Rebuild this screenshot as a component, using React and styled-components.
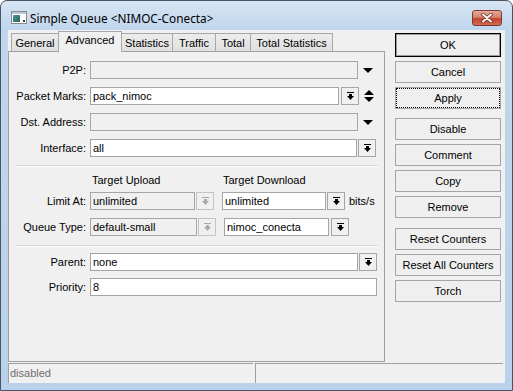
import styled, { createGlobalStyle, css } from "styled-components";

const GlobalStyle = createGlobalStyle`
  html, body {
    margin: 0;
    padding: 0;
    background: #ffffff;
  }
  body {
    font-family: "Liberation Sans", Arial, sans-serif;
    font-size: 11px;
    color: #000;
  }
`;

const Window = styled.div`
  width: 513px;
  height: 391px;
  box-sizing: border-box;
  border: 1px solid #4a5564;
  border-radius: 7px 7px 0 0;
  background: linear-gradient(#d6e5f4 0px, #c0d6ec 28px, #b9d1ea 100%);
  display: flex;
  flex-direction: column;
  padding: 0 7px 7px 7px;
`;

const TitleBar = styled.div`
  height: 29px;
  box-sizing: border-box;
  padding: 4px 3px 0 3px;
  display: flex;
  align-items: center;
`;

const Title = styled.span`
  font-family: "Noto Sans", "Open Sans", sans-serif;
  font-size: 11.8px;
  margin-left: 3px;
  flex: 1;
  color: #000;
`;

const CloseButton = styled.div`
  width: 30px;
  height: 16px;
  box-sizing: border-box;
  border: 1px solid #7e3a31;
  border-radius: 3px;
  background: linear-gradient(#e8a999 0%, #d7816f 45%, #c2432f 55%, #d66b50 100%);
  display: flex;
  align-items: center;
  justify-content: center;
`;

const Client = styled.div`
  flex: 1;
  background: #f0f0f0;
  display: flex;
  flex-direction: column;
`;

const Main = styled.div`
  flex: 1;
  display: flex;
`;

const LeftCol = styled.div`
  width: 377px;
  display: flex;
  flex-direction: column;
`;

const TabRow = styled.div`
  height: 21px;
  display: flex;
  align-items: flex-end;
  padding-left: 3px;
  position: relative;
  z-index: 1;
`;

const Tab = styled.div`
  width: ${(p) => p.$w}px;
  height: 18px;
  box-sizing: border-box;
  border: 1px solid #a7a7a7;
  border-bottom: none;
  background: linear-gradient(#ececec, #e0e0e0);
  display: flex;
  align-items: center;
  justify-content: center;
  white-space: nowrap;
  & + & {
    margin-left: -1px;
  }
  ${(p) =>
    p.$active &&
    css`
      height: 21px;
      margin-bottom: -1px;
      background: #f0f0f0;
      position: relative;
      z-index: 2;
      align-items: flex-start;
      padding-top: 2px;
    `}
`;

const Panel = styled.div`
  flex: 1;
  border: 1px solid #a0a0a0;
  background: #f0f0f0;
  padding-top: 9px;
`;

const Row = styled.div`
  display: flex;
  align-items: center;
  height: 18px;
  margin-top: ${(p) => p.$mt ?? 8}px;
`;

const Label = styled.div`
  width: 77px;
  margin-right: 4px;
  text-align: right;
  white-space: nowrap;
  flex-shrink: 0;
`;

const Field = styled.div`
  width: ${(p) => p.$w}px;
  height: 18px;
  box-sizing: border-box;
  border: 1px solid #a5a5a5;
  background: ${(p) => (p.$disabled ? "#f0f0f0" : "#ffffff")};
  padding-left: 2px;
  line-height: 16px;
  white-space: nowrap;
  overflow: hidden;
  margin-right: ${(p) => p.$mr ?? 0}px;
  flex-shrink: 0;
`;

const DropBtn = styled.div`
  width: 18px;
  height: 18px;
  box-sizing: border-box;
  border: 1px solid ${(p) => (p.$disabled ? "#c4c4c4" : "#a5a5a5")};
  background: #f0f0f0;
  display: flex;
  align-items: center;
  justify-content: center;
  color: ${(p) => (p.$disabled ? "#a9a9a9" : "#000")};
  margin-right: ${(p) => p.$mr ?? 0}px;
  flex-shrink: 0;
`;

const Side = styled.div`
  margin-left: ${(p) => p.$ml}px;
  display: flex;
  align-items: center;
`;

const Separator = styled.div`
  margin: ${(p) => p.$mt}px 6px 0 7px;
  height: 0;
  border-top: 1px solid #d5d5d5;
  border-bottom: 1px solid #ffffff;
`;

const HeaderRow = styled.div`
  display: flex;
  height: 16px;
  align-items: center;
  margin-top: 5px;
  padding-left: 81px;
`;

const HeaderCell = styled.div`
  width: ${(p) => p.$w}px;
  padding-left: 2px;
  box-sizing: border-box;
  white-space: nowrap;
`;

const Unit = styled.span`
  margin-left: 4px;
`;

const RightCol = styled.div`
  width: 106px;
  margin-left: 10px;
  padding-top: 3px;
  display: flex;
  flex-direction: column;
`;

const Button = styled.div`
  height: 22px;
  box-sizing: border-box;
  border: 1px solid #a5a5a5;
  background: #efefef;
  display: flex;
  align-items: center;
  justify-content: center;
  margin-top: ${(p) => p.$mt ?? 4}px;
  white-space: nowrap;
  position: relative;
  ${(p) =>
    p.$default &&
    css`
      height: 24px;
      border: 1px solid #000;
      box-shadow: inset 0 0 0 1px #9a9a9a;
    `}
  ${(p) =>
    p.$focus &&
    css`
      outline: 1px dotted #000;
      outline-offset: -2px;
    `}
`;

const StatusBar = styled.div`
  height: 21px;
  display: flex;
  padding-top: 1px;
  box-sizing: border-box;
  padding-right: 2px;
`;

const StatusCell = styled.div`
  width: ${(p) => p.$w}px;
  margin-right: ${(p) => p.$mr ?? 0}px;
  border-top: 1px solid #a0a0a0;
  border-left: 1px solid #a0a0a0;
  color: #6d6d6d;
  padding-left: 1px;
  line-height: 18px;
  box-sizing: border-box;
`;

const WindowIcon = () => (
  <svg width="16" height="13" viewBox="0 0 16 13">
    <defs>
      <linearGradient id="ic" x1="0" y1="0" x2="1" y2="1">
        <stop offset="0" stopColor="#4f93a6" />
        <stop offset="1" stopColor="#2a6a4c" />
      </linearGradient>
    </defs>
    <rect x="0.5" y="0.5" width="15" height="12" fill="#ffffff" stroke="#8a8a8a" />
    <rect x="1" y="1" width="14" height="2" fill="#b7c9da" />
    <rect x="2" y="4" width="7" height="7" fill="url(#ic)" />
    <rect x="12" y="9" width="2" height="2" fill="#333" />
  </svg>
);

const CloseX = () => (
  <svg width="12" height="10" viewBox="0 0 12 10">
    <path d="M2 1.5 L10 8.5 M10 1.5 L2 8.5" stroke="#6b2a22" strokeWidth="3.6" strokeLinecap="round" />
    <path d="M2 1.5 L10 8.5 M10 1.5 L2 8.5" stroke="#ffffff" strokeWidth="2" strokeLinecap="round" />
  </svg>
);

const DropIcon = () => (
  <svg width="7" height="8" viewBox="0 0 7 8" fill="currentColor">
    <rect x="0" y="0" width="7" height="1" />
    <rect x="2" y="2" width="3" height="2" />
    <polygon points="0,4 7,4 3.5,8" />
  </svg>
);

const DownArrow = () => (
  <svg width="10" height="5" viewBox="0 0 10 5">
    <polygon points="0,0 10,0 5,5" fill="#000" />
  </svg>
);

const UpDownArrow = () => (
  <svg width="10" height="12" viewBox="0 0 10 12">
    <polygon points="5,0 10,5 0,5" fill="#000" />
    <polygon points="0,7 10,7 5,12" fill="#000" />
  </svg>
);

const tabs = [
  { name: "General", w: 48 },
  { name: "Advanced", w: 64, active: true },
  { name: "Statistics", w: 52 },
  { name: "Traffic", w: 44 },
  { name: "Total", w: 36 },
  { name: "Total Statistics", w: 83 },
];

const App = () => {
  return (
    <>
      <GlobalStyle />
      <Window>
        <TitleBar>
          <WindowIcon />
          <Title>Simple Queue &lt;NIMOC-Conecta&gt;</Title>
          <CloseButton>
            <CloseX />
          </CloseButton>
        </TitleBar>
        <Client>
          <Main>
            <LeftCol>
              <TabRow>
                {tabs.map((t) => (
                  <Tab key={t.name} $w={t.w} $active={t.active}>
                    {t.name}
                  </Tab>
                ))}
              </TabRow>
              <Panel>
                <Row $mt={0}>
                  <Label>P2P:</Label>
                  <Field $w={268} $disabled />
                  <Side $ml={5}>
                    <DownArrow />
                  </Side>
                </Row>
                <Row>
                  <Label>Packet Marks:</Label>
                  <Field $w={249} $mr={2}>pack_nimoc</Field>
                  <DropBtn>
                    <DropIcon />
                  </DropBtn>
                  <Side $ml={5}>
                    <UpDownArrow />
                  </Side>
                </Row>
                <Row>
                  <Label>Dst. Address:</Label>
                  <Field $w={268} $disabled />
                  <Side $ml={5}>
                    <DownArrow />
                  </Side>
                </Row>
                <Row>
                  <Label>Interface:</Label>
                  <Field $w={267} $mr={1}>all</Field>
                  <DropBtn>
                    <DropIcon />
                  </DropBtn>
                </Row>

                <Separator $mt={8} />

                <HeaderRow>
                  <HeaderCell $w={131}>Target Upload</HeaderCell>
                  <HeaderCell $w={130}>Target Download</HeaderCell>
                </HeaderRow>
                <Row $mt={4}>
                  <Label>Limit At:</Label>
                  <Field $w={105} $disabled $mr={1}>unlimited</Field>
                  <DropBtn $disabled $mr={8}>
                    <DropIcon />
                  </DropBtn>
                  <Field $w={104} $mr={1}>unlimited</Field>
                  <DropBtn>
                    <DropIcon />
                  </DropBtn>
                  <Unit>bits/s</Unit>
                </Row>
                <Row>
                  <Label>Queue Type:</Label>
                  <Field $w={107} $disabled $mr={1}>default-small</Field>
                  <DropBtn $disabled $mr={8}>
                    <DropIcon />
                  </DropBtn>
                  <Field $w={105} $mr={2}>nimoc_conecta</Field>
                  <DropBtn>
                    <DropIcon />
                  </DropBtn>
                </Row>

                <Separator $mt={9} />

                <Row $mt={6}>
                  <Label>Parent:</Label>
                  <Field $w={268} $mr={1}>none</Field>
                  <DropBtn>
                    <DropIcon />
                  </DropBtn>
                </Row>
                <Row $mt={7}>
                  <Label>Priority:</Label>
                  <Field $w={287}>8</Field>
                </Row>
              </Panel>
            </LeftCol>
            <RightCol>
              <Button $default $mt={0}>OK</Button>
              <Button>Cancel</Button>
              <Button $focus>Apply</Button>
              <Button $mt={9}>Disable</Button>
              <Button>Comment</Button>
              <Button>Copy</Button>
              <Button>Remove</Button>
              <Button $mt={10}>Reset Counters</Button>
              <Button>Reset All Counters</Button>
              <Button>Torch</Button>
            </RightCol>
          </Main>
          <StatusBar>
            <StatusCell $w={245} $mr={2}>disabled</StatusCell>
            <StatusCell $w={249} />
          </StatusBar>
        </Client>
      </Window>
    </>
  );
};

export default App;
